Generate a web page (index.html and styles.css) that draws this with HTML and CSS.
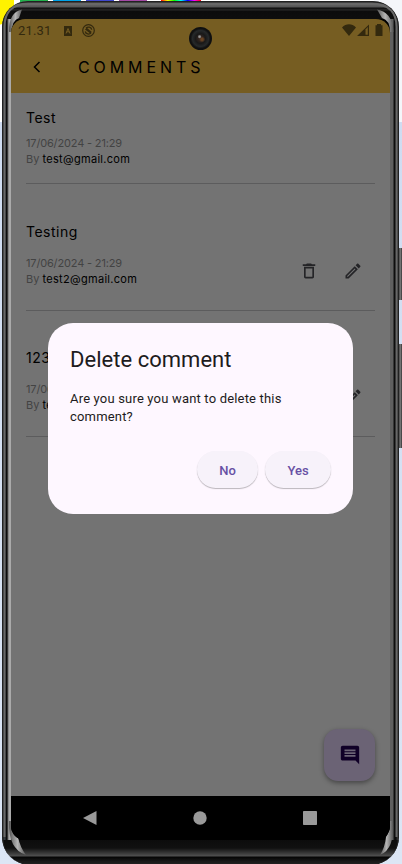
FILE: index.html
```html
<!DOCTYPE html>
<html lang="en">
<head>
<meta charset="utf-8">
<meta name="viewport" content="width=device-width">
<title>Comments</title>
<link rel="stylesheet" href="styles.css">
</head>
<body>
<div class="swatches"><i class="green"></i><i class="cyan"></i><i class="blue"></i><i class="purple"></i><i class="rainbow"></i></div>
<div class="side-key power"></div>
<div class="side-key volume"></div>
<div class="phone">
  <svg class="bezel" viewBox="0 0 397 864">
    <defs>
      <linearGradient id="steel" x1="0" x2="1"><stop offset="0" stop-color="#555"/><stop offset=".5" stop-color="#b5b5b5"/><stop offset="1" stop-color="#555"/></linearGradient>
    </defs>
    <path d="M.7 840V26Q.7 .7 26 .7H370Q396.300 .7 396.300 26V836Q396.300 863 368 863H28Q.7 863 .7 836z" fill="none" stroke="#222" stroke-width="1.4"/>
    <path d="M2.500 836V26Q2.500 3 26 3H370Q394.500 3 394.500 26V836" fill="none" stroke="#686868" stroke-width="2"/>
    <path d="M20 8.500Q7 11 7 30V31H10Q10 19 17 17z" fill="url(#steel)"/>
    <path d="M375 8.500Q390 11 391.500 30V31H388Q388 19 380 17z" fill="url(#steel)"/>
    <path d="M7 820Q6 848 24 854Q18 846 16 836Q10 830 10 820z" fill="url(#steel)"/>
    <path d="M391 820Q393 848 378 854Q383 846 384 836Q388 830 388 820z" fill="url(#steel)"/>
  </svg>
  <div class="screen">
    <header class="header">
      <div class="status">
        <span class="clock">21.31</span>
        <svg class="st-app" viewBox="0 0 8 10"><path fill="#33290e" d="M0 0h8v10H0z"/><path d="M2 7.500 4 2.500l2 5M2.800 5.800h2.400" fill="none" stroke="#765d22"/></svg>
        <svg class="st-ring" viewBox="0 0 13 13" fill="none" stroke="#33290e"><circle cx="6.500" cy="6.500" r="5.800" stroke-width="1.200"/><path d="M3.200 7.500a3.400 3.400 0 0 0 5.800 1.400M4 4.200a3.400 3.400 0 0 1 5.800 1.500" stroke-width="1.300"/><path d="m3 5.500 1.800-1.700L9.800 8 8.300 9.600z" fill="#33290e" stroke="none"/></svg>
        <svg class="st-net" viewBox="0 0 42 13"><path fill="#33290e" d="M0 3.500C4-.8 10-.8 14 3.500L7 12zM27 .5V12H15z"/><path fill="#765d22" d="M23.500 5.500 25.800 3v7.800h-2.300z"/><path fill="#33290e" d="M35 0h4v1.300h1.500V12h-7V1.300H35z"/></svg>
      </div>
      <div class="toolbar">
        <svg class="back" viewBox="0 0 8 12"><path d="M6.500 1 1.500 6l5 5" fill="none" stroke="#000" stroke-width="1.500"/></svg>
        <h1>COMMENTS</h1>
      </div>
      <span class="camera"></span>
    </header>
    <main class="list">
      <article class="comment first">
        <h2>Test</h2>
        <div class="row"><p><span class="date">17/06/2024 - 21:29</span><br>By <b>test@gmail.com</b></p></div>
      </article>
      <article class="comment second">
        <h2 class="testing">Testing</h2>
        <div class="row"><p><span class="date">17/06/2024 - 21:29</span><br>By <b>test2@gmail.com</b></p>
          <svg class="ic" viewBox="0 0 24 24"><path d="M6 19c0 1.100.9 2 2 2h8c1.100 0 2-.9 2-2V7H6zM8 9h8v10H8zM15.500 4l-1-1h-5l-1 1H4.500v2h15V4z"/></svg>
          <svg class="ic" viewBox="0 0 24 24"><path d="m14.060 9.020.92.92L5.920 19H5v-.92zM17.660 3c-.25 0-.51.1-.7.29l-1.830 1.830 3.750 3.750 1.830-1.830a1 1 0 0 0 0-1.410l-2.340-2.340c-.2-.2-.45-.29-.71-.29m-3.600 3.190L3 17.250V21h3.750L17.810 9.940z"/></svg>
        </div>
      </article>
      <article class="comment third">
        <h2>123</h2>
        <div class="row"><p><span class="date">17/06/2024 - 21:29</span><br>By <b>test2@gmail.com</b></p>
          <svg class="ic" viewBox="0 0 24 24"><path d="m14.060 9.020.92.92L5.920 19H5v-.92zM17.660 3c-.25 0-.51.1-.7.29l-1.830 1.830 3.750 3.750 1.830-1.830a1 1 0 0 0 0-1.410l-2.340-2.340c-.2-.2-.45-.29-.71-.29m-3.600 3.190L3 17.250V21h3.750L17.810 9.940z"/></svg>
        </div>
      </article>
      <button class="fab" aria-label="Add comment"><svg viewBox="0 0 24 24"><path d="M21.990 4c0-1.100-.89-2-1.990-2H4c-1.100 0-2 .9-2 2v12c0 1.100.9 2 2 2h14l4 4zM18 14H6v-2h12zm0-3H6V9h12zm0-3H6V6h12z"/></svg></button>
    </main>
    <nav class="nav">
      <svg viewBox="0 0 14 14"><path d="M13.500 0v14L0 7z"/></svg>
      <svg viewBox="0 0 14 14"><circle cx="7" cy="7" r="6.700"/></svg>
      <svg viewBox="0 0 14 14"><rect width="14" height="14" rx=".7"/></svg>
    </nav>
  </div>
</div>
<section class="dialog" role="dialog">
  <h3>Delete comment</h3>
  <p>Are you sure you want to delete this<br>comment?</p>
  <div class="actions"><button class="no">No</button><button class="yes">Yes</button></div>
</section>
</body>
</html>
```
FILE: styles.css
```css
* { box-sizing: border-box; }
body {
  margin: 0; width: 402px; height: 864px; overflow: hidden; position: relative;
  padding: 1px 3px 0 2px;
  background:
    radial-gradient(circle at -6px 4px, #fff200 0 21px, transparent 22px),
    linear-gradient(#fff 0 122px, transparent 122px) 0 0 / 6px 100% no-repeat,
    linear-gradient(#f4f6fa 0 122px, #cfdcf1 122px, #dce6f5);
  font-family: Inter, "Noto Sans", sans-serif;
}
h1, h2, h3, p { margin: 0; font-weight: 400; }
.swatches { position: absolute; left: 14px; top: 0; width: 360px; height: 8px; padding-left: 6px; display: flex; gap: 5px; background: #fff; }
.swatches i { width: 28px; height: 5px; }
.green { background: #22b14c; }
.cyan { background: #00a2e8; }
.blue { background: #3f48cc; }
.purple { background: #a349a4; }
.swatches .rainbow { width: 40px; margin-left: 9px; background: linear-gradient(90deg, red, #ff0, lime, cyan, blue, magenta, red); }
.side-key { position: absolute; left: 398px; width: 4px; background: linear-gradient(90deg, #222, #777 60%, #333); }
.power { top: 248px; height: 52px; }
.volume { top: 344px; height: 104px; }
.phone {
  position: relative; height: 864px; padding: 18px 9px 25px 9px; border-radius: 26px 26px 28px 28px; overflow: hidden;
  background:
    linear-gradient(#555, #666 3px, #555 6px, #0c0c0c 7px, #2a2a2a 9px, #0c0c0c 10px, #0e0e0e 18px) 0 0 / 100% 18px no-repeat,
    linear-gradient(#0c0c0c, #101010 8px, #484848 15px, #505050 16px, #050505 17px, #1c1c1c 22px) 0 100% / 100% 25px no-repeat,
    linear-gradient(90deg, #222 0, #3a4148 3px, #111 4px, #080808 5px, #666 6px, #aaa 7px 9px, #000 9px, #000 388px, #606060 388px 391px, #111 392px, #080808 394px, #555 396px);
}
.bezel { position: absolute; left: 0; top: 0; width: 397px; height: 864px; }
.screen { position: relative; height: 821px; border-radius: 14px; overflow: hidden; display: flex; flex-direction: column; background: #000; }
.header { position: relative; height: 74px; background: #765d22; }
.status { height: 23px; display: flex; align-items: center; padding: 0 6px 0 7px; color: #33290e; }
.clock { font-family: Roboto, sans-serif; font-size: 13px; letter-spacing: .15px; width: 46px; }
.st-app { width: 8px; height: 10px; }
.st-ring { width: 13px; height: 13px; margin-left: 10px; }
.st-net { width: 42px; height: 13px; margin-left: auto; }
.toolbar { display: flex; align-items: center; height: 49px; padding-left: 22px; }
.back { width: 8px; height: 12px; margin-right: 37px; }
h1 { font-size: 16px; line-height: 20px; letter-spacing: 3.9px; color: #000; }
.camera { position: absolute; left: 178px; top: 8px; width: 23px; height: 23px; border-radius: 50%; background: radial-gradient(circle at 46% 42%, #999 0 .7px, transparent 2px), radial-gradient(circle at 57% 54%, #6a4423 0 1px, transparent 3px), radial-gradient(circle at 50% 50%, #33251f 0 2px, #191919 5px, #26292a 8px, #101010 10px); }
.list { position: relative; height: 703px; background: #737373; padding: 0 15px; }
.comment { border-bottom: 1px solid #5c5c5d; color: #000; }
.first { height: 91px; padding-top: 15px; }
.second { height: 127px; padding-top: 38px; }
.third { height: 126px; padding-top: 37px; }
h2 { font-size: 14px; line-height: 20px; letter-spacing: .5px; }
.row { display: flex; align-items: center; padding-right: 12px; gap: 24px; margin-top: 13px; }
.first .row { margin-top: 7px; }
.third .row { margin-top: 13px; }
.row p { font-size: 11px; line-height: 16px; color: #434343; flex: 1; white-space: nowrap; }
.date { letter-spacing: -.16px; }
.row b { font-weight: 400; color: #000; letter-spacing: .3px; }
.ic { width: 20px; height: 20px; fill: #242427; flex: none; }
.fab { position: absolute; right: 15px; bottom: 15px; width: 51px; height: 52px; padding: 15px; border: 0; border-radius: 14px; background: #6b6375; box-shadow: 0 2px 5px #0006; }
.fab svg { display: block; width: 22px; height: 22px; fill: #100027; }
.nav { height: 44px; display: flex; justify-content: space-between; align-items: center; padding: 0 73px 0 72px; background: #000; }
.nav svg { width: 14px; height: 14px; fill: #999; }
.dialog { position: absolute; left: 48px; top: 323px; width: 305px; height: 191px; padding: 23px 22px; border-radius: 25px; background: #fef7ff; color: #1d1b20; font-family: Roboto, sans-serif; }
.dialog h3 { font-size: 22px; line-height: 28px; letter-spacing: .03px; }
.dialog p { font-size: 13px; line-height: 18px; margin-top: 16px; letter-spacing: .18px; }
.actions { display: flex; justify-content: flex-end; gap: 7px; margin-top: 25px; }
.actions button { height: 37px; width: 66px; padding: 1px 0 0; border: 0; border-radius: 19px; background: #f7f2fa; color: #6750a4; font: 500 13px Roboto, sans-serif; box-shadow: 0 1px 1px #0004; }
.actions .no { width: 61px; }
```
